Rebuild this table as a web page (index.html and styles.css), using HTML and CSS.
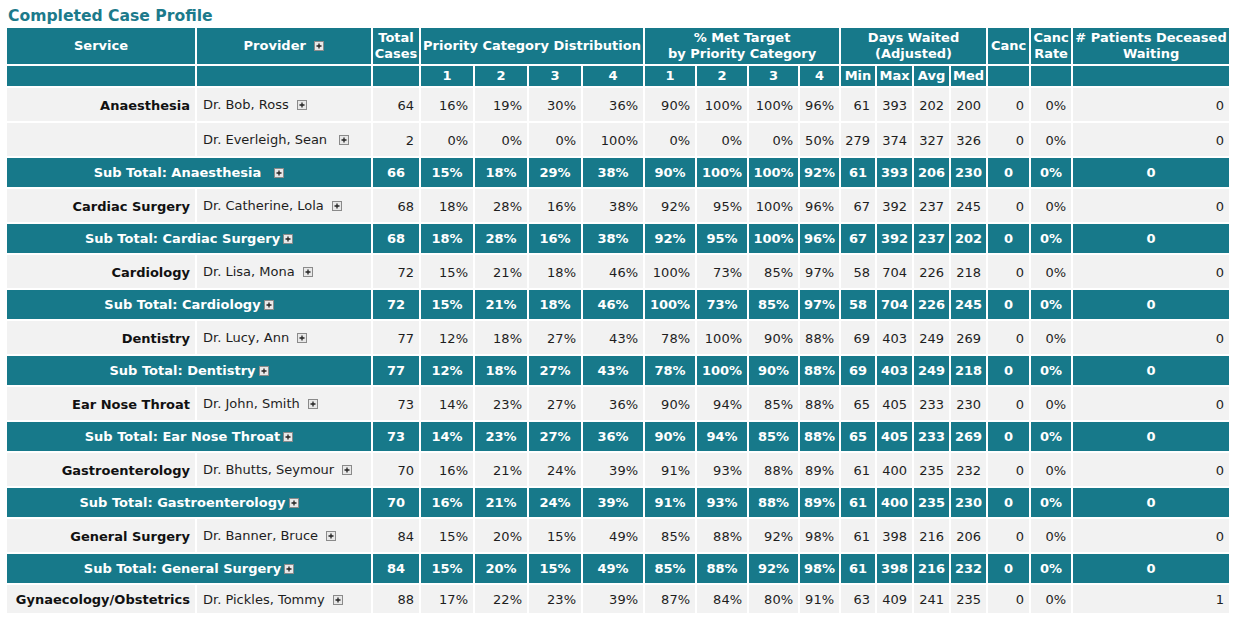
FILE: index.html
```html
<!DOCTYPE html>
<html>
<head>
<meta charset="utf-8">
<title>Completed Case Profile</title>
<link rel="stylesheet" href="styles.css">
</head>
<body>
<h1 class="title">Completed Case Profile</h1>
<table class="profile">
  <colgroup>
    <col class="c-service"><col class="c-provider"><col class="c-total">
    <col class="c-p"><col class="c-p"><col class="c-p"><col class="c-p4">
    <col class="c-m"><col class="c-m"><col class="c-m3"><col class="c-m4">
    <col class="c-min"><col class="c-d"><col class="c-d"><col class="c-d">
    <col class="c-canc"><col class="c-rate"><col class="c-dec">
  </colgroup>
  <thead>
    <tr class="h1">
      <th>Service</th>
      <th>Provider <svg class="plus" viewBox="0 0 10 10" width="10" height="10"><rect x="0.5" y="0.5" width="9" height="9" fill="#e8e8e8" stroke="#8a8a8a"/><path d="M2.5 5h5M5 2.5v5" stroke="#222" stroke-width="1.3"/></svg></th>
      <th>Total<br>Cases</th>
      <th colspan="4">Priority Category Distribution</th>
      <th colspan="4">% Met Target<br>by Priority Category</th>
      <th colspan="4">Days Waited<br>(Adjusted)</th>
      <th>Canc</th>
      <th>Canc<br>Rate</th>
      <th># Patients Deceased<br>Waiting</th>
    </tr>
    <tr class="h2">
      <th></th><th></th><th></th>
      <th>1</th><th>2</th><th>3</th><th>4</th>
      <th>1</th><th>2</th><th>3</th><th>4</th>
      <th>Min</th><th>Max</th><th>Avg</th><th>Med</th>
      <th></th><th></th><th></th>
    </tr>
  </thead>
  <tbody>
    <tr class="row">
      <td class="svc">Anaesthesia</td>
      <td class="prov">Dr. Bob, Ross <svg class="plus" viewBox="0 0 10 10" width="10" height="10"><rect x="0.5" y="0.5" width="9" height="9" fill="#e8e8e8" stroke="#8a8a8a"/><path d="M2.5 5h5M5 2.5v5" stroke="#222" stroke-width="1.3"/></svg></td>
      <td>64</td><td>16%</td><td>19%</td><td>30%</td><td>36%</td>
      <td>90%</td><td>100%</td><td>100%</td><td>96%</td>
      <td>61</td><td>393</td><td>202</td><td>200</td>
      <td>0</td><td>0%</td><td>0</td>
    </tr>
    <tr class="row">
      <td class="svc"></td>
      <td class="prov">Dr. Everleigh, Sean &nbsp;<svg class="plus" viewBox="0 0 10 10" width="10" height="10"><rect x="0.5" y="0.5" width="9" height="9" fill="#e8e8e8" stroke="#8a8a8a"/><path d="M2.5 5h5M5 2.5v5" stroke="#222" stroke-width="1.3"/></svg></td>
      <td>2</td><td>0%</td><td>0%</td><td>0%</td><td>100%</td>
      <td>0%</td><td>0%</td><td>0%</td><td>50%</td>
      <td>279</td><td>374</td><td>327</td><td>326</td>
      <td>0</td><td>0%</td><td>0</td>
    </tr>
    <tr class="sub">
      <td colspan="2">Sub Total: Anaesthesia &nbsp;<svg class="plus" viewBox="0 0 10 10" width="10" height="10"><rect x="0.5" y="0.5" width="9" height="9" fill="#e8e8e8" stroke="#8a8a8a"/><path d="M2.5 5h5M5 2.5v5" stroke="#222" stroke-width="1.3"/></svg></td>
      <td>66</td><td>15%</td><td>18%</td><td>29%</td><td>38%</td>
      <td>90%</td><td>100%</td><td>100%</td><td>92%</td>
      <td>61</td><td>393</td><td>206</td><td>230</td>
      <td>0</td><td>0%</td><td>0</td>
    </tr>
    <tr class="row">
      <td class="svc">Cardiac Surgery</td>
      <td class="prov">Dr. Catherine, Lola <svg class="plus" viewBox="0 0 10 10" width="10" height="10"><rect x="0.5" y="0.5" width="9" height="9" fill="#e8e8e8" stroke="#8a8a8a"/><path d="M2.5 5h5M5 2.5v5" stroke="#222" stroke-width="1.3"/></svg></td>
      <td>68</td><td>18%</td><td>28%</td><td>16%</td><td>38%</td>
      <td>92%</td><td>95%</td><td>100%</td><td>96%</td>
      <td>67</td><td>392</td><td>237</td><td>245</td>
      <td>0</td><td>0%</td><td>0</td>
    </tr>
    <tr class="sub">
      <td colspan="2">Sub Total: Cardiac Surgery<svg class="plus tight" viewBox="0 0 10 10" width="10" height="10"><rect x="0.5" y="0.5" width="9" height="9" fill="#e8e8e8" stroke="#8a8a8a"/><path d="M2.5 5h5M5 2.5v5" stroke="#222" stroke-width="1.3"/></svg></td>
      <td>68</td><td>18%</td><td>28%</td><td>16%</td><td>38%</td>
      <td>92%</td><td>95%</td><td>100%</td><td>96%</td>
      <td>67</td><td>392</td><td>237</td><td>202</td>
      <td>0</td><td>0%</td><td>0</td>
    </tr>
    <tr class="row">
      <td class="svc">Cardiology</td>
      <td class="prov">Dr. Lisa, Mona <svg class="plus" viewBox="0 0 10 10" width="10" height="10"><rect x="0.5" y="0.5" width="9" height="9" fill="#e8e8e8" stroke="#8a8a8a"/><path d="M2.5 5h5M5 2.5v5" stroke="#222" stroke-width="1.3"/></svg></td>
      <td>72</td><td>15%</td><td>21%</td><td>18%</td><td>46%</td>
      <td>100%</td><td>73%</td><td>85%</td><td>97%</td>
      <td>58</td><td>704</td><td>226</td><td>218</td>
      <td>0</td><td>0%</td><td>0</td>
    </tr>
    <tr class="sub">
      <td colspan="2">Sub Total: Cardiology<svg class="plus tight" viewBox="0 0 10 10" width="10" height="10"><rect x="0.5" y="0.5" width="9" height="9" fill="#e8e8e8" stroke="#8a8a8a"/><path d="M2.5 5h5M5 2.5v5" stroke="#222" stroke-width="1.3"/></svg></td>
      <td>72</td><td>15%</td><td>21%</td><td>18%</td><td>46%</td>
      <td>100%</td><td>73%</td><td>85%</td><td>97%</td>
      <td>58</td><td>704</td><td>226</td><td>245</td>
      <td>0</td><td>0%</td><td>0</td>
    </tr>
    <tr class="row">
      <td class="svc">Dentistry</td>
      <td class="prov">Dr. Lucy, Ann <svg class="plus" viewBox="0 0 10 10" width="10" height="10"><rect x="0.5" y="0.5" width="9" height="9" fill="#e8e8e8" stroke="#8a8a8a"/><path d="M2.5 5h5M5 2.5v5" stroke="#222" stroke-width="1.3"/></svg></td>
      <td>77</td><td>12%</td><td>18%</td><td>27%</td><td>43%</td>
      <td>78%</td><td>100%</td><td>90%</td><td>88%</td>
      <td>69</td><td>403</td><td>249</td><td>269</td>
      <td>0</td><td>0%</td><td>0</td>
    </tr>
    <tr class="sub">
      <td colspan="2">Sub Total: Dentistry<svg class="plus tight" viewBox="0 0 10 10" width="10" height="10"><rect x="0.5" y="0.5" width="9" height="9" fill="#e8e8e8" stroke="#8a8a8a"/><path d="M2.5 5h5M5 2.5v5" stroke="#222" stroke-width="1.3"/></svg></td>
      <td>77</td><td>12%</td><td>18%</td><td>27%</td><td>43%</td>
      <td>78%</td><td>100%</td><td>90%</td><td>88%</td>
      <td>69</td><td>403</td><td>249</td><td>218</td>
      <td>0</td><td>0%</td><td>0</td>
    </tr>
    <tr class="row">
      <td class="svc">Ear Nose Throat</td>
      <td class="prov">Dr. John, Smith <svg class="plus" viewBox="0 0 10 10" width="10" height="10"><rect x="0.5" y="0.5" width="9" height="9" fill="#e8e8e8" stroke="#8a8a8a"/><path d="M2.5 5h5M5 2.5v5" stroke="#222" stroke-width="1.3"/></svg></td>
      <td>73</td><td>14%</td><td>23%</td><td>27%</td><td>36%</td>
      <td>90%</td><td>94%</td><td>85%</td><td>88%</td>
      <td>65</td><td>405</td><td>233</td><td>230</td>
      <td>0</td><td>0%</td><td>0</td>
    </tr>
    <tr class="sub">
      <td colspan="2">Sub Total: Ear Nose Throat<svg class="plus tight" viewBox="0 0 10 10" width="10" height="10"><rect x="0.5" y="0.5" width="9" height="9" fill="#e8e8e8" stroke="#8a8a8a"/><path d="M2.5 5h5M5 2.5v5" stroke="#222" stroke-width="1.3"/></svg></td>
      <td>73</td><td>14%</td><td>23%</td><td>27%</td><td>36%</td>
      <td>90%</td><td>94%</td><td>85%</td><td>88%</td>
      <td>65</td><td>405</td><td>233</td><td>269</td>
      <td>0</td><td>0%</td><td>0</td>
    </tr>
    <tr class="row">
      <td class="svc">Gastroenterology</td>
      <td class="prov">Dr. Bhutts, Seymour <svg class="plus" viewBox="0 0 10 10" width="10" height="10"><rect x="0.5" y="0.5" width="9" height="9" fill="#e8e8e8" stroke="#8a8a8a"/><path d="M2.5 5h5M5 2.5v5" stroke="#222" stroke-width="1.3"/></svg></td>
      <td>70</td><td>16%</td><td>21%</td><td>24%</td><td>39%</td>
      <td>91%</td><td>93%</td><td>88%</td><td>89%</td>
      <td>61</td><td>400</td><td>235</td><td>232</td>
      <td>0</td><td>0%</td><td>0</td>
    </tr>
    <tr class="sub">
      <td colspan="2">Sub Total: Gastroenterology<svg class="plus tight" viewBox="0 0 10 10" width="10" height="10"><rect x="0.5" y="0.5" width="9" height="9" fill="#e8e8e8" stroke="#8a8a8a"/><path d="M2.5 5h5M5 2.5v5" stroke="#222" stroke-width="1.3"/></svg></td>
      <td>70</td><td>16%</td><td>21%</td><td>24%</td><td>39%</td>
      <td>91%</td><td>93%</td><td>88%</td><td>89%</td>
      <td>61</td><td>400</td><td>235</td><td>230</td>
      <td>0</td><td>0%</td><td>0</td>
    </tr>
    <tr class="row">
      <td class="svc">General Surgery</td>
      <td class="prov">Dr. Banner, Bruce <svg class="plus" viewBox="0 0 10 10" width="10" height="10"><rect x="0.5" y="0.5" width="9" height="9" fill="#e8e8e8" stroke="#8a8a8a"/><path d="M2.5 5h5M5 2.5v5" stroke="#222" stroke-width="1.3"/></svg></td>
      <td>84</td><td>15%</td><td>20%</td><td>15%</td><td>49%</td>
      <td>85%</td><td>88%</td><td>92%</td><td>98%</td>
      <td>61</td><td>398</td><td>216</td><td>206</td>
      <td>0</td><td>0%</td><td>0</td>
    </tr>
    <tr class="sub">
      <td colspan="2">Sub Total: General Surgery<svg class="plus tight" viewBox="0 0 10 10" width="10" height="10"><rect x="0.5" y="0.5" width="9" height="9" fill="#e8e8e8" stroke="#8a8a8a"/><path d="M2.5 5h5M5 2.5v5" stroke="#222" stroke-width="1.3"/></svg></td>
      <td>84</td><td>15%</td><td>20%</td><td>15%</td><td>49%</td>
      <td>85%</td><td>88%</td><td>92%</td><td>98%</td>
      <td>61</td><td>398</td><td>216</td><td>232</td>
      <td>0</td><td>0%</td><td>0</td>
    </tr>
    <tr class="row last">
      <td class="svc">Gynaecology/Obstetrics</td>
      <td class="prov">Dr. Pickles, Tommy <svg class="plus" viewBox="0 0 10 10" width="10" height="10"><rect x="0.5" y="0.5" width="9" height="9" fill="#e8e8e8" stroke="#8a8a8a"/><path d="M2.5 5h5M5 2.5v5" stroke="#222" stroke-width="1.3"/></svg></td>
      <td>88</td><td>17%</td><td>22%</td><td>23%</td><td>39%</td>
      <td>87%</td><td>84%</td><td>80%</td><td>91%</td>
      <td>63</td><td>409</td><td>241</td><td>235</td>
      <td>0</td><td>0%</td><td>1</td>
    </tr>
  </tbody>
</table>
</body>
</html>
```
FILE: styles.css
```css
html, body {
  background: #ffffff;
}
body {
  margin: 0;
  padding: 6px 0 0 5px;
  font-family: "DejaVu Sans", Verdana, sans-serif;
  font-size: 13px;
  color: #1e1e1e;
}
.title {
  margin: 0 0 0 3px;
  font-size: 15.6px;
  line-height: 20px;
  font-weight: bold;
  color: #1c7a8b;
}
.profile {
  border-collapse: separate;
  border-spacing: 2px;
  table-layout: fixed;
  width: 1226px;
}
.c-service { width: 188px; }
.c-provider { width: 174px; }
.c-total { width: 46px; }
.c-p { width: 52px; }
.c-p4 { width: 60px; }
.c-m { width: 50px; }
.c-m3 { width: 49px; }
.c-m4 { width: 39px; }
.c-min { width: 34px; }
.c-d { width: 35px; }
.c-canc { width: 41px; }
.c-rate { width: 40px; }
.c-dec { width: 156px; }

.profile th,
.profile td {
  padding: 0;
  white-space: nowrap;
  overflow: hidden;
}
.profile th {
  background: #17798a;
  color: #ffffff;
  font-weight: bold;
  text-align: center;
  line-height: 16px;
}
.h1 { height: 36px; }
.h2 { height: 20px; }

.row { height: 33px; }
.row td {
  background: #f2f2f2;
  text-align: right;
  padding-right: 5px;
  padding-top: 2px;
}
.row td.svc {
  font-weight: bold;
  color: #111111;
  padding-right: 5px;
}
.row td.prov {
  text-align: left;
  padding-left: 6px;
  padding-right: 0;
  padding-top: 0;
}
.row.last { height: 28px; }
.row.last td { padding-top: 0; }

.sub { height: 29px; }
.sub td {
  background: #17798a;
  color: #ffffff;
  font-weight: bold;
  text-align: center;
}

.plus {
  display: inline-block;
  vertical-align: -1px;
  margin-left: 4px;
}
.plus.tight {
  margin-left: 3px;
}
```
